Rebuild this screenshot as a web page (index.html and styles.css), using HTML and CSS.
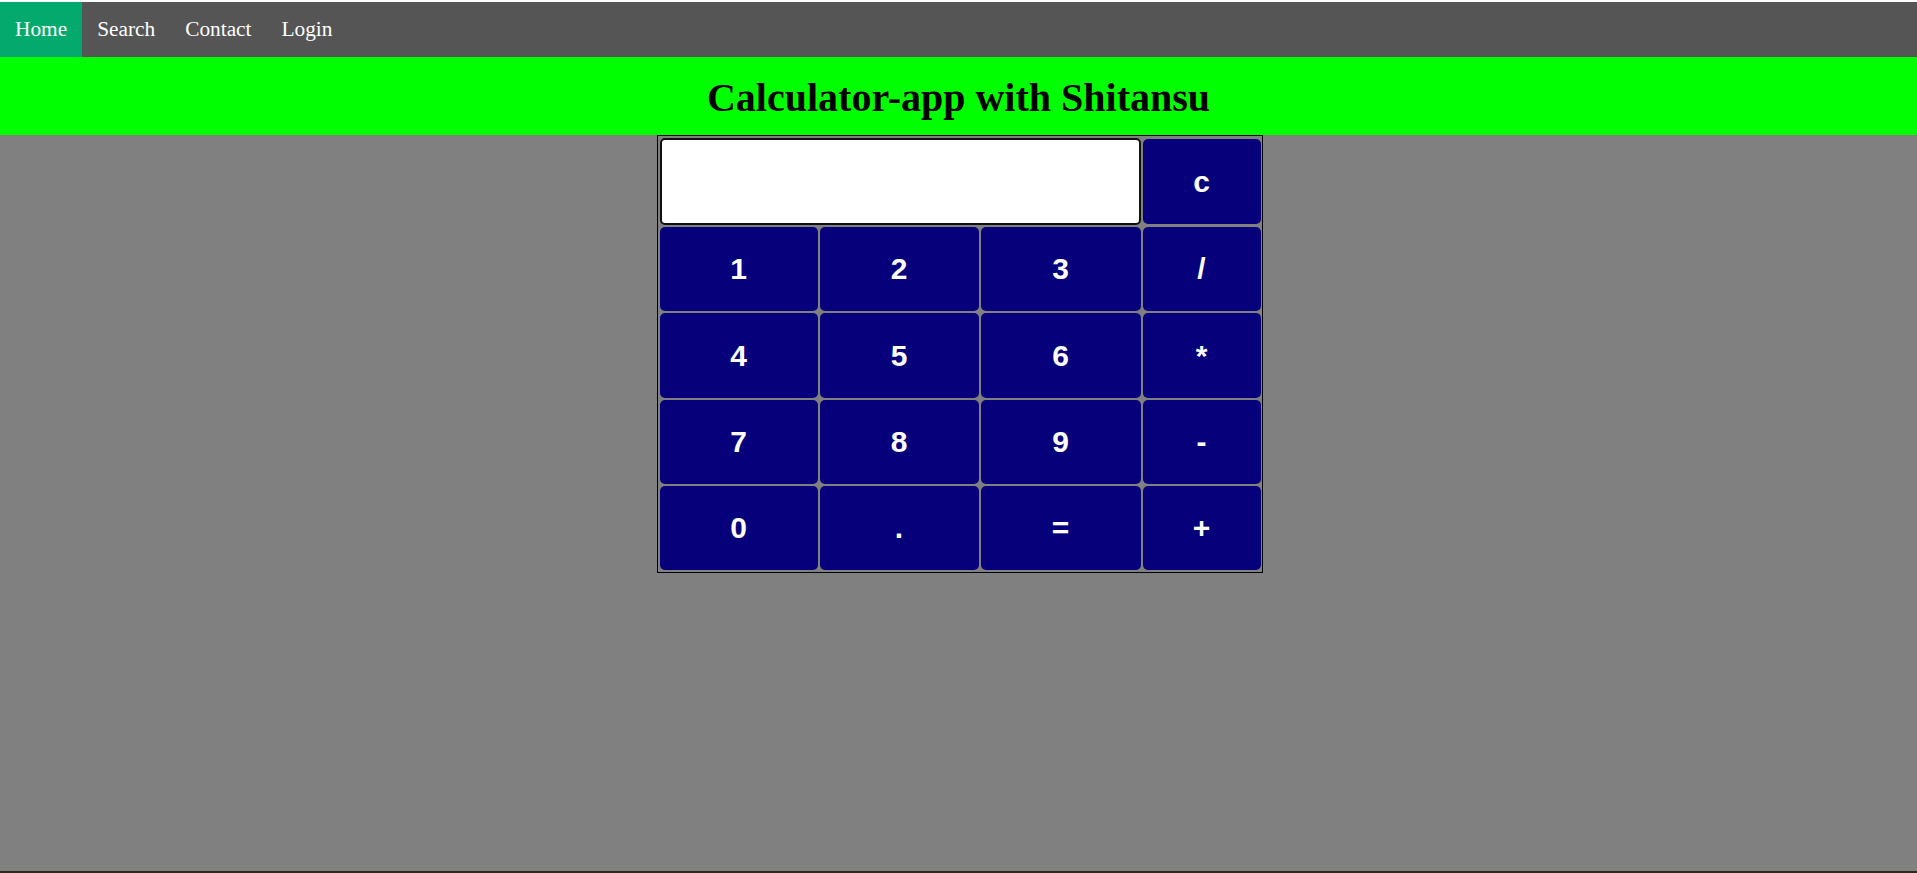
FILE: index.html
```html
<!DOCTYPE html>
<html>
<head>
<meta charset="utf-8">
<title>Calculator</title>
<link rel="stylesheet" href="styles.css">
</head>
<body>
<nav class="topnav">
  <a class="nav-link active" href="#">Home</a>
  <a class="nav-link" href="#">Search</a>
  <a class="nav-link" href="#">Contact</a>
  <a class="nav-link" href="#">Login</a>
</nav>
<header class="banner">
  <h1 class="title">Calculator-app with Shitansu</h1>
</header>
<main class="calc">
  <input class="display" type="text">
  <button class="key key-clear">c</button>
  <button class="key">1</button>
  <button class="key">2</button>
  <button class="key">3</button>
  <button class="key">/</button>
  <button class="key">4</button>
  <button class="key">5</button>
  <button class="key">6</button>
  <button class="key">*</button>
  <button class="key">7</button>
  <button class="key">8</button>
  <button class="key">9</button>
  <button class="key">-</button>
  <button class="key">0</button>
  <button class="key">.</button>
  <button class="key">=</button>
  <button class="key">+</button>
</main>
</body>
</html>
```
FILE: styles.css
```css
html {
  background: #ffffff;
  height: 100%;
}
body {
  margin: 2px 0 0 0;
  min-height: calc(100vh - 2px);
  box-sizing: border-box;
  background: #808080;
  border-bottom: 2px solid #2d2822;
  font-family: "Liberation Serif", "Times New Roman", serif;
}
.topnav {
  display: flex;
  background: #555555;
  height: 55px;
}
.nav-link {
  color: #ffffff;
  text-decoration: none;
  font-size: 21.33px;
  line-height: 27px;
  padding: 14px 15px;
}
.nav-link.active {
  background: #04aa6d;
}
.banner {
  background: #00ff00;
  height: 78px;
  box-sizing: border-box;
  padding-top: 3px;
  display: flex;
  align-items: center;
  justify-content: center;
}
.title {
  margin: 0;
  font-size: 40px;
  font-weight: bold;
  color: #000000;
  line-height: 1;
}
.calc {
  width: 601px;
  margin: 0 auto;
  position: relative;
  left: 1px;
  border: 1px solid #000000;
  padding: 2px 1px 2px 2px;
  display: grid;
  grid-template-columns: 158px 159px 160px 118px;
  grid-template-rows: 87px 84px 85px 84px 84px;
  gap: 2px;
}
.display {
  grid-column: 1 / 4;
  margin: 0;
  box-sizing: border-box;
  height: 87px;
  border: 2px solid #111111;
  border-radius: 5px;
  background: #ffffff;
  padding: 0 8px;
  font-size: 30px;
}
.key {
  margin: 0;
  border: none;
  border-radius: 5px;
  background: #07007b;
  color: #ffffff;
  font-family: "Liberation Sans", Arial, sans-serif;
  font-weight: bold;
  font-size: 30px;
  padding: 0;
}
.key-clear {
  height: 85px;
  align-self: center;
}
```
